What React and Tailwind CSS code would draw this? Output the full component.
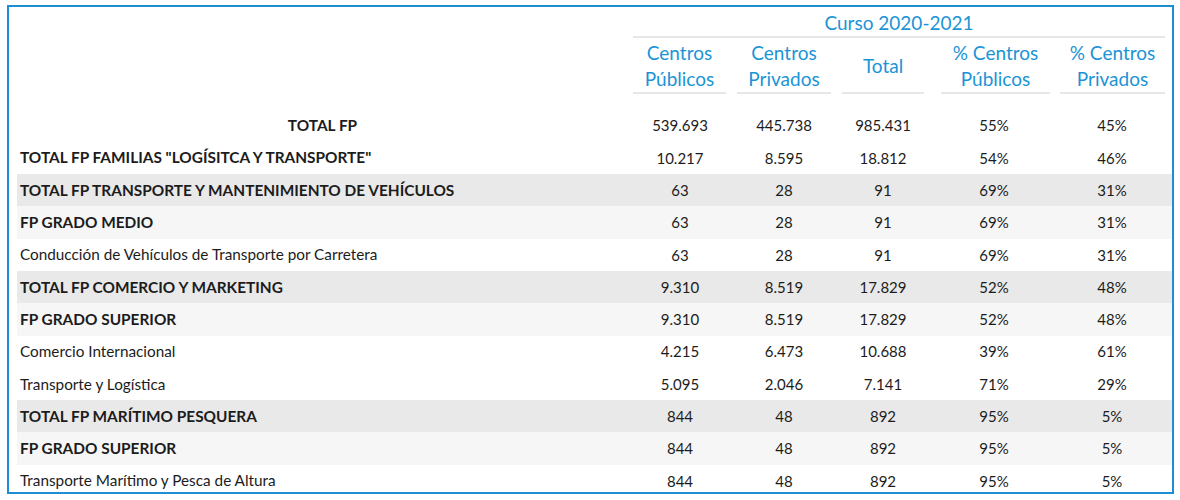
import React from "react";

const rows = [
  { label: "TOTAL FP", center: true, bold: true, bg: "bg-white", vals: ["539.693", "445.738", "985.431", "55%", "45%"] },
  { label: 'TOTAL FP FAMILIAS "LOGÍSITCA Y TRANSPORTE"', bold: true, bg: "bg-white", vals: ["10.217", "8.595", "18.812", "54%", "46%"] },
  { label: "TOTAL FP TRANSPORTE Y MANTENIMIENTO DE VEHÍCULOS", bold: true, bg: "bg-[#e9e9e9]", vals: ["63", "28", "91", "69%", "31%"] },
  { label: "FP GRADO MEDIO", bold: true, bg: "bg-[#f6f6f6]", vals: ["63", "28", "91", "69%", "31%"] },
  { label: "Conducción de Vehículos de Transporte por Carretera", bg: "bg-white", vals: ["63", "28", "91", "69%", "31%"] },
  { label: "TOTAL FP COMERCIO Y MARKETING", bold: true, bg: "bg-[#e9e9e9]", vals: ["9.310", "8.519", "17.829", "52%", "48%"] },
  { label: "FP GRADO SUPERIOR", bold: true, bg: "bg-[#f6f6f6]", vals: ["9.310", "8.519", "17.829", "52%", "48%"] },
  { label: "Comercio Internacional", bg: "bg-white", vals: ["4.215", "6.473", "10.688", "39%", "61%"] },
  { label: "Transporte y Logística", bg: "bg-white", vals: ["5.095", "2.046", "7.141", "71%", "29%"] },
  { label: "TOTAL FP MARÍTIMO PESQUERA", bold: true, bg: "bg-[#e9e9e9]", vals: ["844", "48", "892", "95%", "5%"] },
  { label: "FP GRADO SUPERIOR", bold: true, bg: "bg-[#f6f6f6]", vals: ["844", "48", "892", "95%", "5%"] },
  { label: "Transporte Marítimo y Pesca de Altura", bg: "bg-white", vals: ["844", "48", "892", "95%", "5%"] },
];

const headers = [
  { l1: "Centros", l2: "Públicos", cls: "ml-[5px] mr-[6px]" },
  { l1: "Centros", l2: "Privados", cls: "ml-[5px] mr-[5px]" },
  { l1: "Total", l2: null, cls: "ml-[6px] mr-[6px]" },
  { l1: "% Centros", l2: "Públicos", cls: "ml-[11px] mr-[8px]" },
  { l1: "% Centros", l2: "Privados", cls: "ml-[2px] mr-[1px]" },
];

const grid = "grid grid-cols-[611px_104px_104px_94px_128px_108px_1fr]";

export default function App() {
  return (
    <div className="w-[1180px] h-[500px] bg-white pt-[5px] pl-[7px] font-['Lato',sans-serif]">
      <div className="w-[1167px] h-[489px] border-2 border-[#1d8dd5] pl-[8px] overflow-hidden bg-white">
        <div className={grid}>
          <div className="col-start-2 col-end-8 ml-[5px] mr-[7px] h-[31px] pt-[3px] flex items-center justify-center border-b-2 border-[#e7e7e7] text-[19px] text-[#1b94d6]">
            Curso 2020-2021
          </div>
        </div>
        <div className={grid}>
          <div />
          {headers.map((h, i) => (
            <div
              key={i}
              className={`${h.cls} h-[56px] pt-[2px] flex flex-col items-center justify-center border-b-2 border-[#e7e7e7] text-[19px] leading-[26px] text-[#1b94d6]`}
            >
              <span>{h.l1}</span>
              {h.l2 && <span>{h.l2}</span>}
            </div>
          ))}
          <div />
        </div>
        <div className="h-[15.5px]" />
        {rows.map((r, i) => (
          <div key={i} className={`${grid} ${r.bg} h-[32.3px] items-center text-[15px] text-[#1c1c1c]`}>
            <div
              className={`${r.center ? "text-center" : "pl-[3px]"} ${
                r.bold ? "font-bold text-[15.4px]" : "text-[15.3px]"
              } whitespace-nowrap`}
            >
              {r.label}
            </div>
            {r.vals.map((v, j) => (
              <div key={j} className="text-center">
                {v}
              </div>
            ))}
            <div />
          </div>
        ))}
      </div>
    </div>
  );
}
